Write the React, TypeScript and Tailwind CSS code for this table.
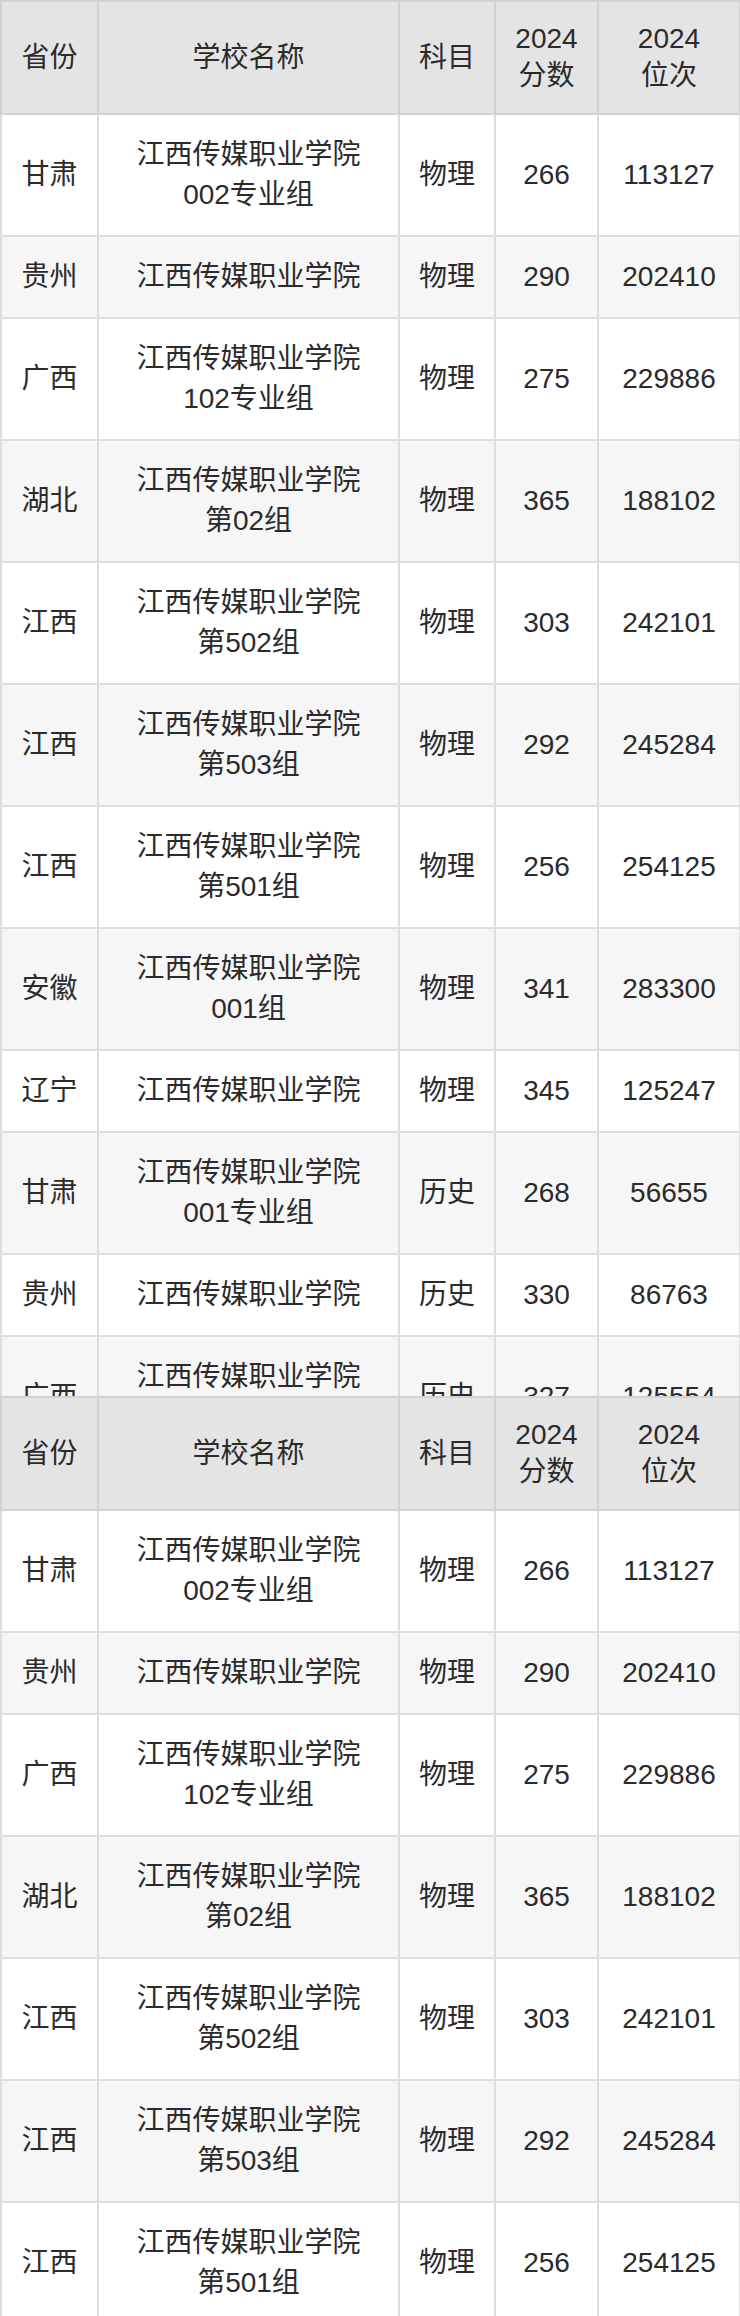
import React from "react";

type Row = { p: string; s: string[]; k: string; f: string; w: string };

const rowsA: Row[] = [
  { p: "甘肃", s: ["江西传媒职业学院", "002专业组"], k: "物理", f: "266", w: "113127" },
  { p: "贵州", s: ["江西传媒职业学院"], k: "物理", f: "290", w: "202410" },
  { p: "广西", s: ["江西传媒职业学院", "102专业组"], k: "物理", f: "275", w: "229886" },
  { p: "湖北", s: ["江西传媒职业学院", "第02组"], k: "物理", f: "365", w: "188102" },
  { p: "江西", s: ["江西传媒职业学院", "第502组"], k: "物理", f: "303", w: "242101" },
  { p: "江西", s: ["江西传媒职业学院", "第503组"], k: "物理", f: "292", w: "245284" },
  { p: "江西", s: ["江西传媒职业学院", "第501组"], k: "物理", f: "256", w: "254125" },
  { p: "安徽", s: ["江西传媒职业学院", "001组"], k: "物理", f: "341", w: "283300" },
  { p: "辽宁", s: ["江西传媒职业学院"], k: "物理", f: "345", w: "125247" },
  { p: "甘肃", s: ["江西传媒职业学院", "001专业组"], k: "历史", f: "268", w: "56655" },
  { p: "贵州", s: ["江西传媒职业学院"], k: "历史", f: "330", w: "86763" },
  { p: "广西", s: ["江西传媒职业学院", "101专业组"], k: "历史", f: "327", w: "125554" },
];

const rowsB: Row[] = rowsA.slice(0, 7);

function Table({ rows }: { rows: Row[] }) {
  const th =
    "border-2 border-[#d2d2d2] bg-[#e4e4e4] pt-[18px] pb-[19px] px-2 text-center align-middle font-normal leading-[37px]";
  const td = "border-2 border-[#dedede] py-5 px-2 text-center align-middle leading-[40px]";
  return (
    <table className="w-[739px] table-fixed border-collapse text-[28px] text-[#2b2b2b]">
      <colgroup>
        <col className="w-[97px]" />
        <col className="w-[301px]" />
        <col className="w-[96px]" />
        <col className="w-[103px]" />
        <col className="w-[142px]" />
      </colgroup>
      <thead>
        <tr>
          <th className={th}>省份</th>
          <th className={th}>学校名称</th>
          <th className={th}>科目</th>
          <th className={th}>
            2024
            <br />
            分数
          </th>
          <th className={th}>
            2024
            <br />
            位次
          </th>
        </tr>
      </thead>
      <tbody>
        {rows.map((r, i) => (
          <tr key={i} className={i % 2 === 0 ? "bg-white" : "bg-[#f6f6f6]"}>
            <td className={td}>{r.p}</td>
            <td className={td}>
              {r.s.map((l, j) => (
                <div key={j}>{l}</div>
              ))}
            </td>
            <td className={td}>{r.k}</td>
            <td className={td}>{r.f}</td>
            <td className={td}>{r.w}</td>
          </tr>
        ))}
      </tbody>
    </table>
  );
}

export default function App() {
  return (
    <div
      className="h-[2316px] w-[740px] overflow-hidden bg-white"
      style={{ fontFamily: '"Liberation Sans", Arial, "Noto Sans CJK SC", sans-serif' }}
    >
      <div className="h-[1396px] overflow-hidden">
        <Table rows={rowsA} />
      </div>
      <Table rows={rowsB} />
    </div>
  );
}
